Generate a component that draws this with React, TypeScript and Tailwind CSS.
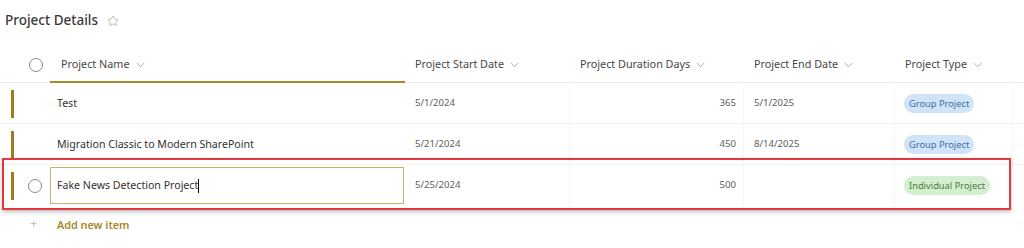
import { Star } from 'lucide-react';

const cols = [
  { key: 'start', label: 'Project Start Date', w: 'w-[165px]' },
  { key: 'dur', label: 'Project Duration Days', w: 'w-[174px]' },
  { key: 'end', label: 'Project End Date', w: 'w-[151px]' },
  { key: 'type', label: 'Project Type', w: 'w-[118px]' },
];

const rows = [
  { name: 'Test', start: '5/1/2024', dur: '365', end: '5/1/2025', type: 'Group Project' },
  { name: 'Migration Classic to Modern SharePoint', start: '5/21/2024', dur: '450', end: '8/14/2025', type: 'Group Project' },
];

function Chevron() {
  return (
    <svg width="9" height="6" viewBox="0 0 9 6" className="ml-[6px] mt-[1px]">
      <path d="M0.8 1 L4.5 4.7 L8.2 1" fill="none" stroke="#a19f9d" strokeWidth="0.9" />
    </svg>
  );
}

function Circle() {
  return <div className="w-[14px] h-[14px] rounded-full border border-[#8a8886]" />;
}

function Pill({ type }: { type: string }) {
  const green = type === 'Individual Project';
  return (
    <span
      className={`inline-flex items-center h-[19px] px-[5px] rounded-full text-[9.3px] ${
        green ? 'bg-[#d3efcf] text-[#4b7a3e]' : 'bg-[#d0e4f8] text-[#3d6ea3]'
      }`}
    >
      {type}
    </span>
  );
}

export default function App() {
  return (
    <div className="w-[1024px] h-[248px] bg-white relative overflow-hidden text-[#323130]" style={{ fontFamily: '"Noto Sans", "Open Sans", sans-serif' }}>
      <div className="flex items-center h-[40px] pl-[5px] pt-[1px]">
        <span className="text-[13.5px] font-medium text-[#3b3a39]">Project Details</span>
        <Star size={12} strokeWidth={1.1} className="ml-[9px] text-[#8a8886]" />
      </div>

      <div className="mt-[7px]">
        {/* header */}
        <div className="flex h-[36px] items-center border-b border-[#edebe9]">
          <div className="w-[50px] flex pl-[29px] h-full items-center">
            <Circle />
          </div>
          <div className="w-[355px] h-full flex items-center pl-[11px] border-b-2 border-[#a68a2a] mb-[-2px] text-[10.8px] text-[#484644]">
            Project Name <Chevron />
          </div>
          {cols.map((c) => (
            <div key={c.key} className={`${c.w} h-full flex items-center pl-[10px] text-[10.8px] text-[#484644]`}>
              {c.label} <Chevron />
            </div>
          ))}
        </div>

        {rows.map((r) => (
          <div key={r.name} className="flex h-[41px] items-center border-b border-[#f3f2f1] pt-[1px]">
            <div className="w-[50px] h-full flex items-center pl-[11px]">
              <div className="w-[3px] h-[28px] bg-[#a17a1d]" />
            </div>
            <div className="w-[355px] h-full flex items-center pl-[7px] text-[10.6px]">{r.name}</div>
            <div className="w-[165px] h-full flex items-center pl-[10px] text-[9.6px] text-[#605e5c] border-r border-[#f6f5f4]">{r.start}</div>
            <div className="w-[174px] h-full flex items-center justify-end pr-[7px] text-[9.6px] text-[#605e5c] border-r border-[#f6f5f4]">{r.dur}</div>
            <div className="w-[151px] h-full flex items-center pl-[10px] text-[9.6px] text-[#605e5c] border-r border-[#f6f5f4]">{r.end}</div>
            <div className="w-[118px] h-full flex items-center pl-[9px] border-r border-[#f6f5f4]">
              <Pill type={r.type} />
            </div>
          </div>
        ))}

        {/* editing row */}
        <div className="flex h-[41px] items-center">
          <div className="w-[50px] h-full flex items-center pl-[11px]">
            <div className="w-[3px] h-[28px] bg-[#a17a1d]" />
            <div className="ml-[14px]">
              <Circle />
            </div>
          </div>
          <div className="w-[355px] h-full flex items-center py-[2px] pr-[1px]">
            <div className="w-full h-full border border-[#c8b26a] flex items-center pl-[6px] text-[10.6px]">
              Fake News Detection Project
              <span className="inline-block w-[1px] h-[14px] bg-black" />
            </div>
          </div>
          <div className="w-[165px] h-full flex items-center pl-[10px] text-[9.6px] text-[#605e5c] border-r border-[#f6f5f4]">5/25/2024</div>
          <div className="w-[174px] h-full flex items-center justify-end pr-[7px] text-[9.6px] text-[#605e5c] border-r border-[#f6f5f4]">500</div>
          <div className="w-[151px] h-full flex items-center pl-[10px] border-r border-[#f6f5f4]" />
          <div className="w-[118px] h-full flex items-center pl-[9px]">
            <Pill type="Individual Project" />
          </div>
        </div>

        <div className="flex items-center h-[36px] mt-[1px]">
          <div className="w-[50px] flex pl-[30px] text-[13px] text-[#a19f9d] font-light">+</div>
          <span className="text-[10.8px] font-semibold text-[#a68a2a] pl-[7px]">Add new item</span>
        </div>
      </div>

      {/* red annotation box */}
      <div className="absolute left-[2px] top-[158px] w-[1009px] h-[52px] border-2 border-[#e2383f] shadow-[0_2px_4px_rgba(0,0,0,0.25)] pointer-events-none" />
    </div>
  );
}
